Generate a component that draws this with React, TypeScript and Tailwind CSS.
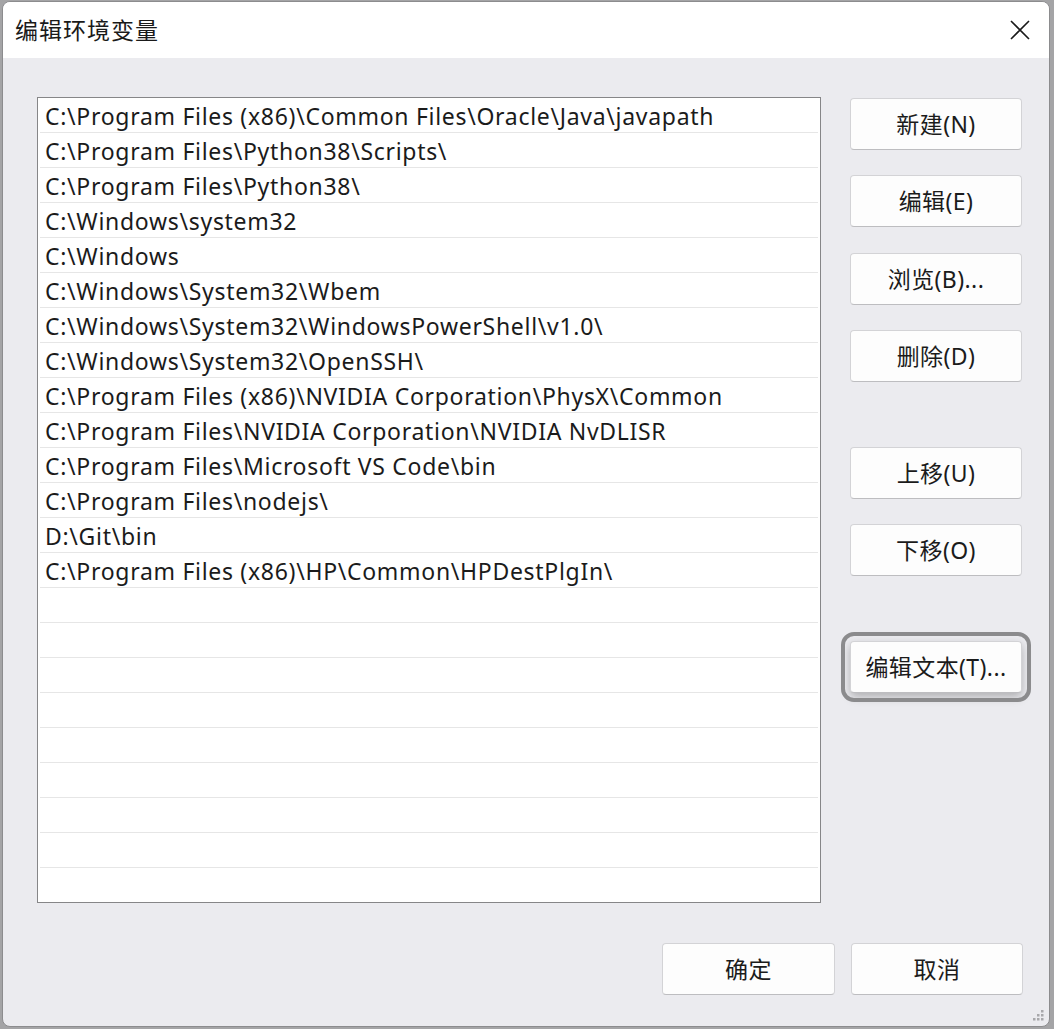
import React from 'react';

const paths = [
  'C:\\Program Files (x86)\\Common Files\\Oracle\\Java\\javapath',
  'C:\\Program Files\\Python38\\Scripts\\',
  'C:\\Program Files\\Python38\\',
  'C:\\Windows\\system32',
  'C:\\Windows',
  'C:\\Windows\\System32\\Wbem',
  'C:\\Windows\\System32\\WindowsPowerShell\\v1.0\\',
  'C:\\Windows\\System32\\OpenSSH\\',
  'C:\\Program Files (x86)\\NVIDIA Corporation\\PhysX\\Common',
  'C:\\Program Files\\NVIDIA Corporation\\NVIDIA NvDLISR',
  'C:\\Program Files\\Microsoft VS Code\\bin',
  'C:\\Program Files\\nodejs\\',
  'D:\\Git\\bin',
  'C:\\Program Files (x86)\\HP\\Common\\HPDestPlgIn\\',
];

const font = "font-['Segoe_UI','Noto_Sans','Noto_Sans_CJK_SC',sans-serif]";

function Btn({ label, className = '' }: { label: string; className?: string }) {
  return (
    <button
      className={`h-[52px] w-[172px] rounded-[4px] border border-[#d3d3d6] border-b-[#bdbdc0] bg-[#fdfdfd] text-[23px] tracking-[0.4px] text-[#1b1b1b] ${className}`}
    >
      {label}
    </button>
  );
}

export default function App() {
  // 23 rows, the rest after the paths are blank
  const rows = [...paths, ...Array(23 - paths.length).fill('')];
  return (
    <div className={`w-[1054px] h-[1029px] bg-[#a4a4a6] pt-[1px] pl-[2px] ${font}`}>
      <div className="relative w-[1048px] h-[1026px] rounded-[8px] border border-[#8c8c8e] bg-[#ebebef] overflow-hidden flex flex-col">
        {/* title bar */}
        <div className="h-[56px] bg-white flex items-center justify-between pl-[12px] pr-[20px] shrink-0">
          <span className="text-[23px] text-[#1a1a1a] tracking-[1px]">编辑环境变量</span>
          <svg width="22" height="22" viewBox="0 0 22 22" className="mr-[-2px]">
            <path d="M2 2 L20 20 M20 2 L2 20" stroke="#1a1a1a" strokeWidth="1.6" fill="none" />
          </svg>
        </div>

        {/* body */}
        <div className="flex-1 pl-[34px] pt-[39px]">
          <div className="flex gap-[29px]">
            <div className="w-[784px] h-[806px] border border-[#868688] bg-white overflow-hidden">
              {rows.map((p, i) => (
                <div key={i} className="mx-[2px] h-[35px] border-b border-[#e6e6e6] pl-[5px] pt-[2px] flex items-center text-[23px] tracking-[0.7px] text-[#1b1b1b] whitespace-nowrap leading-none">
                  {p}
                </div>
              ))}
            </div>

            <div className="flex flex-col pt-[1px]">
              <Btn label="新建(N)" />
              <Btn label="编辑(E)" className="mt-[25px]" />
              <Btn label="浏览(B)..." className="mt-[26px]" />
              <Btn label="删除(D)" className="mt-[25px]" />
              <Btn label="上移(U)" className="mt-[65px]" />
              <Btn label="下移(O)" className="mt-[25px]" />
              <Btn
                label="编辑文本(T)..."
                className="mt-[65px] outline-[4px] outline-solid outline-[#8b8b8d] outline-offset-[5px] shadow-[0_4px_10px_rgba(0,0,0,0.25)]"
              />
            </div>
          </div>

          <div className="flex justify-end gap-[16px] mt-[40px] pr-[26px]">
            <Btn label="确定" className="w-[173px] border-[#7c7c80] border-b-[#7c7c80]" />
            <Btn label="取消" />
          </div>
        </div>

        {/* size grip */}
        <svg width="14" height="14" viewBox="0 0 14 14" className="absolute right-[4px] bottom-[4px]">
          <rect x="10" y="2" width="2.5" height="2.5" fill="#a8a8ab" />
          <rect x="6" y="6" width="2.5" height="2.5" fill="#a8a8ab" />
          <rect x="10" y="6" width="2.5" height="2.5" fill="#a8a8ab" />
          <rect x="2" y="10" width="2.5" height="2.5" fill="#a8a8ab" />
          <rect x="6" y="10" width="2.5" height="2.5" fill="#a8a8ab" />
          <rect x="10" y="10" width="2.5" height="2.5" fill="#a8a8ab" />
        </svg>
      </div>
    </div>
  );
}
